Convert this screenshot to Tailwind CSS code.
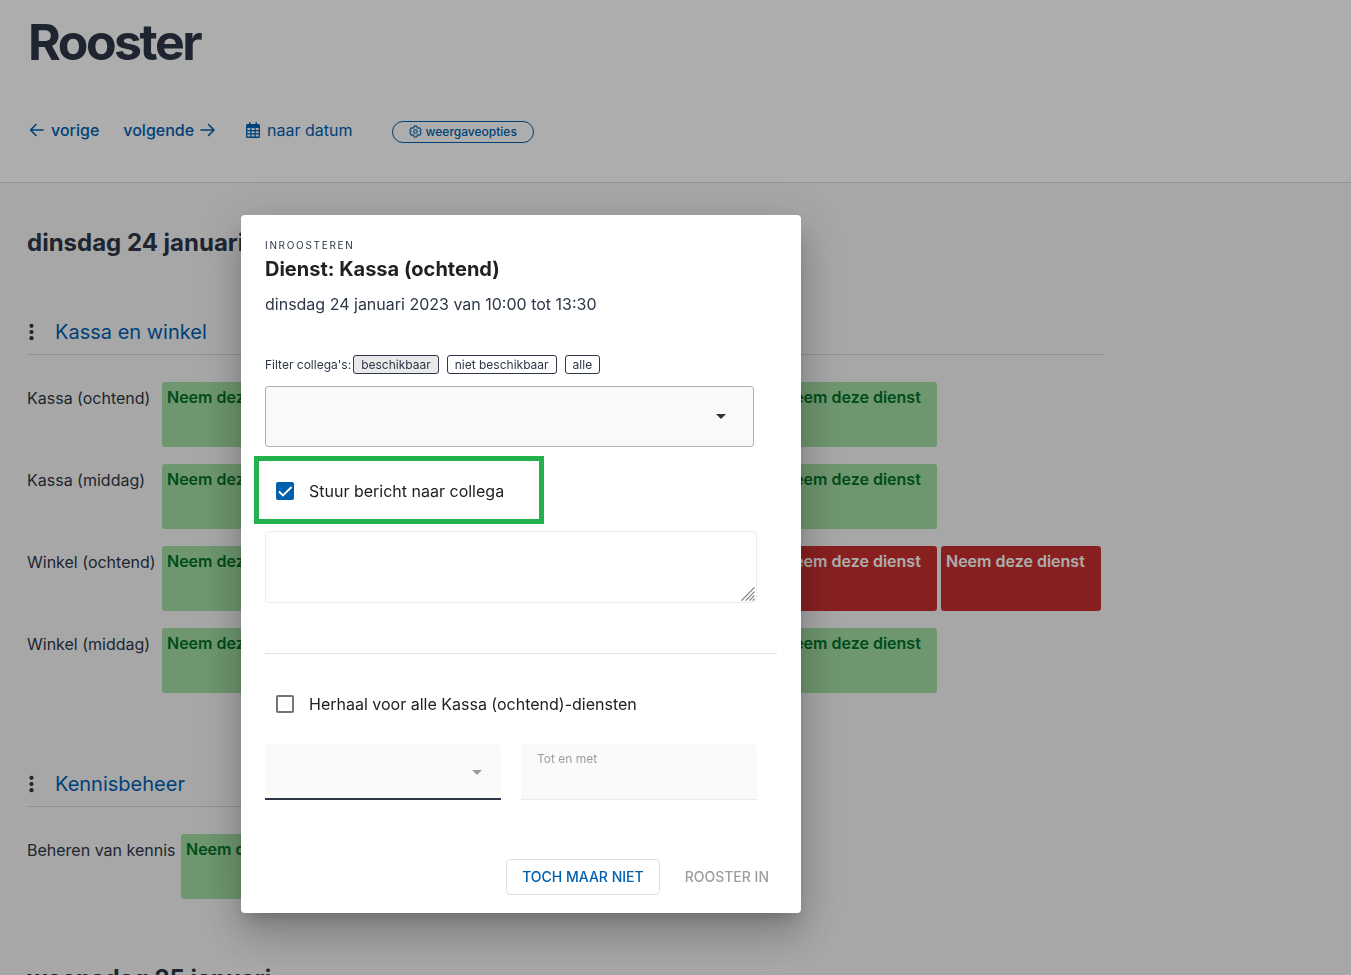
<!DOCTYPE html>
<html lang="nl">
<head>
    <meta charset="UTF-8">
    <meta name="viewport" content="width=device-width, initial-scale=1.0">
    <title>Rooster</title>
    <script src="https://cdn.jsdelivr.net/npm/@tailwindcss/browser@4"></script>
</head>
<body class="bg-[#f7f7f7] font-['Inter',sans-serif] text-base text-[#2d3748] h-screen overflow-hidden">

    <!-- Page header -->
    <header class="bg-white border-b border-[#d9d9d9] px-7 pt-3 pb-[39px]">
        <h1 class="text-[50px] leading-[60px] font-bold tracking-tighter">Rooster</h1>
        <nav class="mt-11 flex items-center h-[27px] text-[#0060b0] font-medium">
            <a href="#" class="flex items-center gap-[7px]">
                <svg class="w-4 h-4" viewBox="0 0 16 16" fill="none" stroke="currentColor" stroke-width="1.6" stroke-linecap="round" stroke-linejoin="round"><path d="M15 8H2.500M8 2.500L2.500 8l5.500 5.500"/></svg>
                vorige
            </a>
            <a href="#" class="ml-6 flex items-center gap-1.5">
                volgende
                <svg class="w-4 h-4" viewBox="0 0 16 16" fill="none" stroke="currentColor" stroke-width="1.6" stroke-linecap="round" stroke-linejoin="round"><path d="M1 8h13M8.500 2.500L14 8l-5.500 5.500"/></svg>
            </a>
            <a href="#" class="ml-[29px] flex items-center gap-1.5 font-normal">
                <svg class="w-4 h-4" viewBox="0 0 16 16" fill="currentColor" fill-rule="evenodd"><path d="M4 0.300h1.500V2h5V0.300H12V2h1.500A1.500 1.500 0 0 1 15 3.500v11a1.500 1.500 0 0 1-1.500 1.500h-11A1.500 1.500 0 0 1 1 14.500v-11A1.500 1.500 0 0 1 2.500 2H4zM2.300 6v2h3V6zM6.500 6v2h3V6zM10.700 6v2h3V6zM2.300 9.200v2h3v-2zM6.500 9.200v2h3v-2zM10.700 9.200v2h3v-2zM2.300 12.400v2h3v-2zM6.500 12.400v2h3v-2zM10.700 12.400v2h3v-2z"/></svg>
                naar datum
            </a>
            <button type="button" class="ml-[39px] mt-1 flex items-center gap-1 h-[22px] px-4 border border-[#0060b0] rounded-full text-xs font-medium">
                <svg class="w-[13px] h-[13px]" viewBox="0 0 24 24" fill="none" stroke="currentColor" stroke-width="2" stroke-linejoin="round"><path d="M9.500 2h5l.7 3.100 1.700 1 3-1 2.500 4.200-2.300 2.700 2.300 2.700-2.500 4.200-3-1-1.700 1-.7 3.100h-5l-.7-3.100-1.700-1-3 1-2.500-4.200L3.900 12 1.600 9.300l2.500-4.200 3 1 1.700-1z"/><circle cx="12" cy="12" r="3.300"/></svg>
                weergaveopties
            </button>
        </nav>
    </header>

    <!-- Schedule -->
    <main class="px-[27px] pt-[42px]">
        <h2 class="text-2xl leading-9 font-bold">dinsdag 24 januari</h2>

        <section class="max-w-[1076px] mt-[55px]">
            <div class="flex items-center gap-4 pb-1.5 border-b border-[#d6d6d6] mb-[27px]">
                <button type="button" aria-label="Meer opties" class="w-3">
                    <svg class="w-[9px] h-5" viewBox="0 0 9 20" fill="currentColor"><circle cx="4.500" cy="3.800" r="2.100"/><circle cx="4.500" cy="10" r="2.100"/><circle cx="4.500" cy="16.200" r="2.100"/></svg>
                </button>
                <h3 class="text-xl leading-8 text-[#0060b0]"><a href="#">Kassa en winkel</a></h3>
            </div>
            <div class="grid gap-[17px] pr-0.5">
                <div class="flex gap-1 h-[65px]">
                    <div class="w-[131px] pt-1">Kassa (ochtend)</div>
                    <button type="button" class="w-40 flex items-start rounded-[3px] bg-[#a3dea4] px-[5px] pt-[3px] text-[#007028] font-semibold">Neem deze dienst</button>
                    <button type="button" aria-label="Dienst" class="flex-1 rounded-[3px] bg-[#a3dea4]"></button>
                    <button type="button" class="w-40 flex items-start rounded-[3px] bg-[#a3dea4] px-[5px] pt-[3px] text-[#007028] font-semibold">Neem deze dienst</button>
                    <div class="w-40"></div>
                </div>
                <div class="flex gap-1 h-[65px]">
                    <div class="w-[131px] pt-1">Kassa (middag)</div>
                    <button type="button" class="w-40 flex items-start rounded-[3px] bg-[#a3dea4] px-[5px] pt-[3px] text-[#007028] font-semibold">Neem deze dienst</button>
                    <button type="button" aria-label="Dienst" class="flex-1 rounded-[3px] bg-[#a3dea4]"></button>
                    <button type="button" class="w-40 flex items-start rounded-[3px] bg-[#a3dea4] px-[5px] pt-[3px] text-[#007028] font-semibold">Neem deze dienst</button>
                    <div class="w-40"></div>
                </div>
                <div class="flex gap-1 h-[65px]">
                    <div class="w-[131px] pt-1">Winkel (ochtend)</div>
                    <button type="button" class="w-40 flex items-start rounded-[3px] bg-[#a3dea4] px-[5px] pt-[3px] text-[#007028] font-semibold">Neem deze dienst</button>
                    <button type="button" aria-label="Dienst" class="flex-1 rounded-[3px] bg-[#a3dea4]"></button>
                    <button type="button" class="w-40 flex items-start rounded-[3px] bg-[#ca3030] px-[5px] pt-[3px] text-white font-semibold">Neem deze dienst</button>
                    <button type="button" class="w-40 flex items-start rounded-[3px] bg-[#ca3030] px-[5px] pt-[3px] text-white font-semibold">Neem deze dienst</button>
                </div>
                <div class="flex gap-1 h-[65px]">
                    <div class="w-[131px] pt-1">Winkel (middag)</div>
                    <button type="button" class="w-40 flex items-start rounded-[3px] bg-[#a3dea4] px-[5px] pt-[3px] text-[#007028] font-semibold">Neem deze dienst</button>
                    <button type="button" aria-label="Dienst" class="flex-1 rounded-[3px] bg-[#a3dea4]"></button>
                    <button type="button" class="w-40 flex items-start rounded-[3px] bg-[#a3dea4] px-[5px] pt-[3px] text-[#007028] font-semibold">Neem deze dienst</button>
                    <div class="w-40"></div>
                </div>
            </div>
        </section>

        <section class="max-w-[1076px] mt-[75px]">
            <!-- the rule of this section ends under the dialog -->
            <div class="w-1/2 flex items-center gap-4 pb-1.5 border-b border-[#d6d6d6] mb-[27px]">
                <button type="button" aria-label="Meer opties" class="w-3">
                    <svg class="w-[9px] h-5" viewBox="0 0 9 20" fill="currentColor"><circle cx="4.500" cy="3.800" r="2.100"/><circle cx="4.500" cy="10" r="2.100"/><circle cx="4.500" cy="16.200" r="2.100"/></svg>
                </button>
                <h3 class="text-xl leading-8 text-[#0060b0]"><a href="#">Kennisbeheer</a></h3>
            </div>
            <div class="flex gap-1 h-[65px]">
                <div class="w-[150px] pt-1">Beheren van kennis</div>
                <button type="button" class="w-40 flex items-start rounded-[3px] bg-[#a3dea4] px-[5px] pt-[3px] text-[#007028] font-semibold">Neem deze dienst</button>
            </div>
        </section>

        <h2 class="mt-[62px] text-2xl leading-9 font-bold">woensdag 25 januari</h2>
    </main>

    <!-- Dialog -->
    <div class="fixed inset-0 bg-black/32 pt-[215px] pl-[241px]">
        <form role="dialog" aria-labelledby="dialog-title" class="w-[560px] bg-white rounded px-6 pt-[22px] pb-[18px] shadow-[0_11px_15px_-7px_rgba(0,0,0,0.2),0_24px_38px_3px_rgba(0,0,0,0.14),0_9px_46px_8px_rgba(0,0,0,0.12)]">
            <p class="text-[10px] leading-4 tracking-[0.17em] uppercase">Inroosteren</p>
            <h2 id="dialog-title" class="text-xl leading-8 font-bold text-[#212121]">Dienst: Kassa (ochtend)</h2>
            <p class="mt-[7px] leading-6">dinsdag 24 januari 2023 van 10:00 tot 13:30</p>

            <div class="mt-[39px] flex items-center text-xs">
                <span class="mr-0.5">Filter collega's:</span>
                <button type="button" class="h-[19px] px-[7px] border border-[#2d3748] rounded-[3px] bg-[#e9e9e9]">beschikbaar</button>
                <button type="button" class="ml-2 h-[19px] px-[7px] border border-[#2d3748] rounded-[3px]">niet beschikbaar</button>
                <button type="button" class="ml-2 h-[19px] px-[7px] border border-[#2d3748] rounded-[3px]">alle</button>
            </div>

            <div class="relative mt-3 mr-[23px]">
                <select aria-label="Collega" class="block w-full h-[61px] appearance-none border border-[#b0b0b0] rounded-[3px] bg-[#f9f9f9] px-4"></select>
                <svg class="absolute right-7 top-7 w-[10px] h-[5px]" viewBox="0 0 10 5" fill="#333333"><path d="M0 0h10L5 5z"/></svg>
            </div>

            <div class="-ml-[11px] mt-[9px] w-[290px] h-[68px] border-5 border-[#22b14c] flex items-center pl-[17px] pt-0.5">
                <span class="relative flex">
                    <input type="checkbox" id="bericht" checked class="appearance-none w-[18px] h-[18px] rounded-[2px] bg-[#0060b0]">
                    <svg class="absolute inset-0 w-[18px] h-[18px] pointer-events-none" viewBox="0 0 18 18" fill="none" stroke="#ffffff" stroke-width="1.800"><path d="M3 9.500l4 4L15.500 5"/></svg>
                </span>
                <label for="bericht" class="ml-[15px] text-[#212121]">Stuur bericht naar collega</label>
            </div>

            <div class="relative mt-[7px] mr-5">
                <textarea aria-label="Bericht" class="block w-full h-[72px] resize-none border border-[#ededed] rounded p-2"></textarea>
                <svg class="absolute right-0.5 bottom-0.5 w-[14px] h-[14px]" viewBox="0 0 15 15" fill="none" stroke="#777777" stroke-width="1.200"><path d="M0.500 14.500l14-14M5 14.500l9.500-9.500M9 14.500l5.500-5.500M12.500 14.500l2-2"/></svg>
            </div>

            <hr class="mt-[50px] border-[#e0e0e0]">

            <div class="mt-[38px] ml-[11px] flex items-center">
                <input type="checkbox" id="herhaal" class="appearance-none w-[18px] h-[18px] rounded-[2px] border-2 border-[#757575]">
                <label for="herhaal" class="ml-[15px] text-[#212121]">Herhaal voor alle Kassa (ochtend)-diensten</label>
            </div>

            <div class="mt-7 mr-5 grid grid-cols-2 gap-5">
                <div class="relative">
                    <select aria-label="Herhaling" disabled class="block w-full h-14 appearance-none rounded-t border-b-2 border-[#2d3748] bg-[#fafafa] px-4"></select>
                    <svg class="absolute right-[19px] top-[26px] w-[10px] h-[5px]" viewBox="0 0 10 5" fill="#999999"><path d="M0 0h10L5 5z"/></svg>
                </div>
                <div class="relative">
                    <label for="tot" class="absolute left-4 top-[7px] text-xs text-[#9e9e9e]">Tot en met</label>
                    <input type="text" id="tot" disabled class="block w-full h-14 rounded-t border-b border-[#ebebeb] bg-[#fafafa] px-4 pt-5">
                </div>
            </div>

            <div class="mt-[59px] flex justify-end items-center gap-[17px] text-sm font-medium">
                <button type="button" class="h-9 px-[15px] border border-[#e0e0e0] rounded text-[#0060b0] uppercase">Toch maar niet</button>
                <button type="submit" disabled class="h-9 px-2 text-[#9e9e9e] uppercase">Rooster in</button>
            </div>
        </form>
    </div>
</body>
</html>
